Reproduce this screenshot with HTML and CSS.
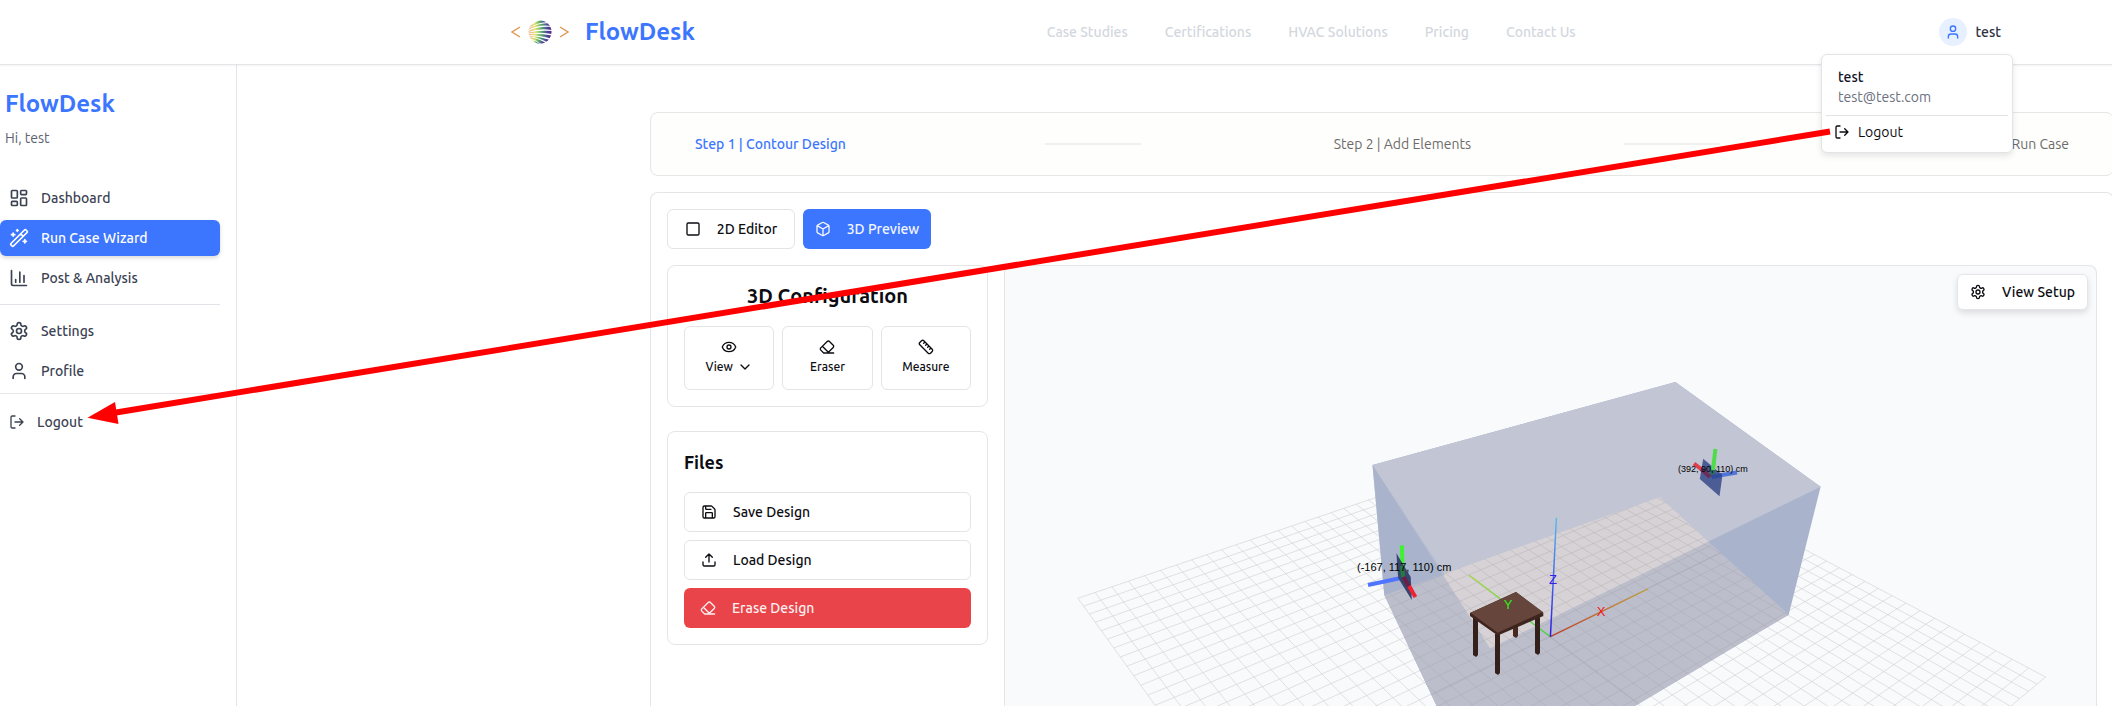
FILE: index.html
```html
<!DOCTYPE html>
<html lang="en">
<head>
<meta charset="utf-8">
<title>FlowDesk</title>
<meta name="viewport" content="width=device-width, initial-scale=1">
<link rel="stylesheet" href="styles.css">
</head>
<body>
<svg class="sprite" aria-hidden="true">
  <symbol id="i-logout" viewBox="0 0 24 24"><path d="M9 21H5a2 2 0 0 1-2-2V5a2 2 0 0 1 2-2h4M16 17l5-5-5-5M21 12H9"/></symbol>
  <symbol id="i-user" viewBox="0 0 24 24"><path d="M19 21v-2a4 4 0 0 0-4-4H9a4 4 0 0 0-4 4v2"/><circle cx="12" cy="7" r="4"/></symbol>
  <symbol id="i-gear" viewBox="0 0 24 24"><path d="M12.220 2h-.44a2 2 0 0 0-2 2v.18a2 2 0 0 1-1 1.730l-.43.25a2 2 0 0 1-2 0l-.15-.08a2 2 0 0 0-2.730.730l-.22.380a2 2 0 0 0 .730 2.730l.15.100a2 2 0 0 1 1 1.720v.510a2 2 0 0 1-1 1.740l-.15.090a2 2 0 0 0-.730 2.730l.22.380a2 2 0 0 0 2.730.730l.15-.08a2 2 0 0 1 2 0l.43.250a2 2 0 0 1 1 1.730V20a2 2 0 0 0 2 2h.440a2 2 0 0 0 2-2v-.18a2 2 0 0 1 1-1.730l.43-.25a2 2 0 0 1 2 0l.15.080a2 2 0 0 0 2.730-.730l.22-.390a2 2 0 0 0-.730-2.730l-.15-.08a2 2 0 0 1-1-1.740v-.5a2 2 0 0 1 1-1.740l.15-.090a2 2 0 0 0 .730-2.730l-.22-.380a2 2 0 0 0-2.730-.730l-.15.080a2 2 0 0 1-2 0l-.43-.25a2 2 0 0 1-1-1.730V4a2 2 0 0 0-2-2z"/><circle cx="12" cy="12" r="3"/></symbol>
  <symbol id="i-dash" viewBox="0 0 24 24"><rect x="3" y="3" width="7" height="9" rx="1"/><rect x="14" y="3" width="7" height="5" rx="1"/><rect x="14" y="12" width="7" height="9" rx="1"/><rect x="3" y="16" width="7" height="5" rx="1"/></symbol>
  <symbol id="i-wand" viewBox="0 0 24 24"><path d="m21.640 3.640-1.280-1.280a1.210 1.210 0 0 0-1.720 0L2.360 18.640a1.210 1.210 0 0 0 0 1.720l1.280 1.280a1.200 1.200 0 0 0 1.720 0L21.640 5.360a1.200 1.200 0 0 0 0-1.720M14 7l3 3M5 6v4M19 14v4M10 2v2M7 8H3M21 16h-4M11 3H9"/></symbol>
  <symbol id="i-chart" viewBox="0 0 24 24"><path d="M3 3v16a2 2 0 0 0 2 2h16M8 17v-3M13 17V5M18 17V9"/></symbol>
  <symbol id="i-square" viewBox="0 0 24 24"><rect x="3" y="3" width="18" height="18" rx="2"/></symbol>
  <symbol id="i-box" viewBox="0 0 24 24"><path d="M21 8a2 2 0 0 0-1-1.730l-7-4a2 2 0 0 0-2 0l-7 4A2 2 0 0 0 3 8v8a2 2 0 0 0 1 1.730l7 4a2 2 0 0 0 2 0l7-4A2 2 0 0 0 21 16ZM3.300 7l8.700 5 8.700-5M12 22V12"/></symbol>
  <symbol id="i-eye" viewBox="0 0 24 24"><path d="M2.060 12.350a1 1 0 0 1 0-.7 10.750 10.750 0 0 1 19.880 0 1 1 0 0 1 0 .7 10.750 10.750 0 0 1-19.880 0"/><circle cx="12" cy="12" r="3"/></symbol>
  <symbol id="i-eraser" viewBox="0 0 24 24"><path d="m7 21-4.300-4.300c-1-1-1-2.500 0-3.400l9.600-9.600c1-1 2.500-1 3.400 0l5.600 5.600c1 1 1 2.500 0 3.400L13 21M22 21H7M5 11l9 9"/></symbol>
  <symbol id="i-ruler" viewBox="0 0 24 24"><path d="M21.300 15.300a2.400 2.400 0 0 1 0 3.400l-2.600 2.600a2.400 2.400 0 0 1-3.400 0L2.700 8.700a2.410 2.410 0 0 1 0-3.400l2.600-2.600a2.410 2.410 0 0 1 3.400 0ZM14.500 12.500l2-2M11.500 9.500l2-2M8.500 6.500l2-2M17.500 15.500l2-2"/></symbol>
  <symbol id="i-chev" viewBox="0 0 24 24"><path d="m6 9 6 6 6-6"/></symbol>
  <symbol id="i-save" viewBox="0 0 24 24"><path d="M15.200 3a2 2 0 0 1 1.400.6l3.800 3.800a2 2 0 0 1 .6 1.400V19a2 2 0 0 1-2 2H5a2 2 0 0 1-2-2V5a2 2 0 0 1 2-2zM17 21v-7a1 1 0 0 0-1-1H8a1 1 0 0 0-1 1v7M7 3v4a1 1 0 0 0 1 1h7"/></symbol>
  <symbol id="i-upload" viewBox="0 0 24 24"><path d="M21 15v4a2 2 0 0 1-2 2H5a2 2 0 0 1-2-2v-4M17 8l-5-5-5 5M12 3v12"/></symbol>
</svg>

<div class="app">
  <header class="topbar">
    <a class="brand" href="#">
      <svg class="brand-mark" viewBox="0 0 62 28" aria-hidden="true">
        <defs>
          <linearGradient id="sphere" x1="0" x2="1" y1="0" y2="0"><stop offset="0" stop-color="#f3b0a0"/><stop offset=".3" stop-color="#e3e36c"/><stop offset=".55" stop-color="#58b06a"/><stop offset=".8" stop-color="#4b4a9c"/><stop offset="1" stop-color="#5a1a7c"/></linearGradient>
          <clipPath id="ball"><circle cx="31" cy="14" r="11.500"/></clipPath>
        </defs>
        <path class="angle" d="M11 9 3 14l8 5M51 9l8 5-8 5"/>
        <g clip-path="url(#ball)" fill="url(#sphere)">
          <path d="M21 8Q28 2 36 1L39 4Q29 4 20 10Z"/>
          <path d="M19 11Q28 5 41 5L43 8Q30 6 19 12Z"/>
          <path d="M19 13Q30 8 43 9V12Q30 10 19 14Z"/>
          <path d="M19 14.500Q30 12 43 13V16Q30 14 19 15.500Z"/>
          <path d="M19 16Q30 15 43 17.500L42 20.500Q30 17 19 17Z"/>
          <path d="M19 17.500Q30 18 41 22L39 24.500Q28 19 20 18.500Z"/>
          <path d="M20 19Q28 20 37 25L33 27Q27 22 21 20.500Z"/>
          <path d="M22 22Q27 23 31 26L26 27Z"/>
        </g>
      </svg>
      <span class="wordmark">FlowDesk</span>
    </a>
    <nav class="topnav">
      <a href="#">Case Studies</a><a href="#">Certifications</a><a href="#">HVAC Solutions</a><a href="#">Pricing</a><a href="#">Contact Us</a>
    </nav>
    <div class="account">
      <button class="account-btn" type="button"><span class="avatar"><svg class="ico s16"><use href="#i-user"/></svg></span>test</button>
      <div class="menu">
        <div class="menu-head"><strong>test</strong><span>test@test.com</span></div>
        <button class="menu-item" type="button"><svg class="ico s16"><use href="#i-logout"/></svg>Logout</button>
      </div>
    </div>
  </header>

  <div class="body">
    <aside class="sidebar">
      <div class="side-head"><span class="wordmark">FlowDesk</span><p>Hi, test</p></div>
      <nav class="side-nav">
        <a href="#"><svg class="ico s20"><use href="#i-dash"/></svg>Dashboard</a>
        <a class="active" href="#"><svg class="ico s20"><use href="#i-wand"/></svg>Run Case Wizard</a>
        <a href="#"><svg class="ico s20"><use href="#i-chart"/></svg>Post &amp; Analysis</a>
      </nav>
      <nav class="side-nav second">
        <a href="#"><svg class="ico s20"><use href="#i-gear"/></svg>Settings</a>
        <a href="#"><svg class="ico s20"><use href="#i-user"/></svg>Profile</a>
      </nav>
      <div class="side-foot"><button type="button"><svg class="ico s16"><use href="#i-logout"/></svg>Logout</button></div>
    </aside>

    <main class="main">
      <ol class="steps">
        <li class="current">Step 1 | Contour Design</li>
        <li class="bar"></li>
        <li>Step 2 | Add Elements</li>
        <li class="bar"></li>
        <li>Step 3 | Run Case</li>
      </ol>
      <section class="work">
        <div class="tabs">
          <button class="btn" type="button"><svg class="ico s16"><use href="#i-square"/></svg>2D Editor</button>
          <button class="btn primary" type="button"><svg class="ico s16"><use href="#i-box"/></svg>3D Preview</button>
        </div>
        <div class="columns">
          <div class="panels">
            <section class="panel">
              <h2>3D Configuration</h2>
              <div class="tools">
                <button type="button"><svg class="ico s16"><use href="#i-eye"/></svg><span>View <svg class="ico s16"><use href="#i-chev"/></svg></span></button>
                <button type="button"><svg class="ico s16"><use href="#i-eraser"/></svg><span>Eraser</span></button>
                <button type="button"><svg class="ico s16"><use href="#i-ruler"/></svg><span>Measure</span></button>
              </div>
            </section>
            <section class="panel files">
              <h3>Files</h3>
              <button class="btn" type="button"><svg class="ico s16"><use href="#i-save"/></svg>Save Design</button>
              <button class="btn" type="button"><svg class="ico s16"><use href="#i-upload"/></svg>Load Design</button>
              <button class="btn danger" type="button"><svg class="ico s16"><use href="#i-eraser"/></svg>Erase Design</button>
            </section>
          </div>
          <div class="scene">
            <svg class="canvas" viewBox="1005 266 1091 440" preserveAspectRatio="xMidYMin slice" role="img" aria-label="3D preview of the room">
              <defs>
                <clipPath id="floor"><path d="M1384.300 595 1659.700 497 1788.700 614.700 1480 798Z"/></clipPath>
                <clipPath id="roof"><path d="M1372.500 465 1675.400 382 1820.600 486.700 1490 648.300Z"/></clipPath>
                <linearGradient id="gz" gradientUnits="userSpaceOnUse" x1="1556" y1="518" x2="1550" y2="637"><stop stop-color="#5cbcec"/><stop offset="1" stop-color="#2c18e6"/></linearGradient>
                <linearGradient id="gx" gradientUnits="userSpaceOnUse" x1="1550" y1="637" x2="1648" y2="589"><stop stop-color="#c23a2c"/><stop offset="1" stop-color="#c2a030"/></linearGradient>
                <linearGradient id="gy" gradientUnits="userSpaceOnUse" x1="1550" y1="637" x2="1469" y2="575"><stop stop-color="#3cd83c"/><stop offset="1" stop-color="#a4d83c"/></linearGradient>
              </defs>
              <path id="grid" class="grid"/>
              <path fill="#a9b4cc" d="M1372.500 465 1675.400 382 1820.600 486.700 1788.700 614.700 1480 798 1384.300 595Z"/>
              <path fill="#c2c5d4" d="M1372.500 465 1675.400 382 1820.600 486.700 1490 648.300Z"/>
              <g clip-path="url(#floor)">
                <path fill="#bcbecc" d="M1380 480H1800V800H1380Z"/>
                <path clip-path="url(#roof)" fill="#d7d2d6" d="M1360 370H1830V660H1360Z"/>
                <use href="#grid" class="grid-floor"/>
                <path class="axis-shade" d="M1550.400 636.700 1767.300 529.700M1550.400 636.700 1387 717M1550.400 636.700 1700 750"/>
              </g>
              <path fill="#a9b4cc" fill-opacity=".55" d="M1372.500 465 1445 575 1384.300 595Z"/>
              <g class="beam">
                <path stroke="#4f74ff" d="M1368 585 1401 578"/>
                <path stroke="#3df22e" d="M1401.800 545.300 1403 577"/>
                <path fill="#36456f" d="M1396.400 553.300 1410.700 577 1411.800 600 1398.200 578Z"/>
                <path stroke="#257a3c" d="M1402 566 1403 577"/>
                <path stroke="#6b1f45" d="M1403.500 577 1411 590"/>
                <path stroke="#ee2233" d="M1409 586 1415.400 597"/>
                <path fill="#4b5d94" d="M1703.200 458.700 1722.500 475 1719.500 496.300 1699.800 479Z"/>
                <path stroke="#4edd48" d="M1715.400 449 1713 470"/>
                <path stroke="#2b6b58" d="M1713 470 1712.300 477"/>
                <path stroke="#e2404b" d="M1694 463.500 1701 469"/>
                <path stroke="#6c2c58" d="M1701 469 1710 477"/>
                <path stroke="#2e4ba0" d="M1711.700 477 1722 475"/>
                <path stroke="#5174d8" d="M1722 475 1737 472.500"/>
              </g>
              <text class="coord" x="1357" y="571">(-167, 117, 110) cm</text>
              <text class="coord far" x="1678" y="472">(392, 90, 110) cm</text>
              <g fill="none">
                <path stroke="url(#gy)" stroke-width="1.300" d="M1550.400 636.700 1469.300 575.300"/>
                <path stroke="url(#gx)" stroke-width="1.300" d="M1550.400 636.700 1647.900 589"/>
                <path stroke="url(#gz)" stroke-width="1.500" d="M1550.400 636.700 1556.400 517.700"/>
              </g>
              <g>
                <path fill="#46291f" d="M1513 620h5v16l-2 2-3-2Z"/>
                <path fill="#33201b" d="M1473 614h5v41l-2 2-3-2ZM1535 614h5v39l-2 2-3-2ZM1495 634h5v39l-2 2-3-2Z"/>
                <path fill="#3e251d" d="M1470 613 1516 592 1543.300 612.700V616L1497.700 635.500 1470 616Z"/>
                <path fill="#65453c" d="M1470.500 612.800 1516 592 1543 612 1497.700 632.700Z"/>
              </g>
              <text class="axis" fill="#3a1ee6" x="1553" y="584">Z</text>
              <text class="axis" fill="#f01818" x="1601" y="616">X</text>
              <text class="axis" fill="#30f018" x="1508" y="609">Y</text>
            </svg>
            <button class="view-setup" type="button"><svg class="ico s16"><use href="#i-gear"/></svg>View Setup</button>
          </div>
        </div>
      </section>
    </main>
  </div>
  <svg class="arrow" viewBox="0 0 2112 706" preserveAspectRatio="none" aria-hidden="true">
    <path d="M1830 131.500 110 413.500" stroke="#f00" stroke-width="6"/>
    <path d="M87.500 417.700 115 402 118.500 424Z" fill="#f00"/>
  </svg>
</div>
<script src="scene.js"></script>
</body>
</html>
```

FILE: styles.css
```css
* { box-sizing: border-box; }
body {
  margin: 0;
  font: 500 14px/20px Ubuntu, "Noto Sans", "Open Sans", sans-serif;
  color: #0c0c12;
  background: #fff;
}
a { color: inherit; text-decoration: none; }
button { font: inherit; color: inherit; background: none; border: 0; padding: 0; cursor: pointer; }
h2, h3, p, ol { margin: 0; padding: 0; }
.sprite { position: absolute; width: 0; height: 0; }
.ico { fill: none; stroke: currentColor; stroke-width: 2; stroke-linecap: round; stroke-linejoin: round; flex: none; }
.s16 { width: 16px; height: 16px; }
.s20 { width: 20px; height: 20px; }

.app { position: relative; min-height: 100vh; display: flex; flex-direction: column; overflow: hidden; }

.topbar {
  position: relative;
  z-index: 2;
  height: 65px;
  padding: 0 111px 0 509px;
  display: flex;
  align-items: center;
  justify-content: space-between;
  border-bottom: 1px solid #e4e5e8;
  box-shadow: 0 1px 2px rgba(0, 0, 0, .05);
}
.brand { display: flex; align-items: center; gap: 14px; }
.brand-mark { width: 62px; height: 28px; }
.angle { fill: none; stroke: #e0954f; stroke-width: 1.4; }
.wordmark { font-size: 24px; line-height: 32px; font-weight: 700; color: #3c76ff; }
.topnav { display: flex; gap: 37px; padding-right: 12px; color: #d3d7de; }
.account { position: relative; }
.account-btn { display: flex; align-items: center; gap: 8px; color: #2d3342; }
.avatar { width: 28px; height: 28px; border-radius: 50%; background: #e6f0ff; color: #3c76ff; display: grid; place-items: center; }
.menu {
  position: absolute;
  top: 36px;
  right: -12px;
  width: 192px;
  padding: 4px;
  background: #fff;
  border: 1px solid #e3e4e7;
  border-radius: 6px;
  box-shadow: 0 3px 6px rgba(0, 0, 0, .1);
}
.menu-head { padding: 8px 12px; border-bottom: 1px solid #e1e2e6; display: flex; flex-direction: column; }
.menu-head strong { font-weight: 500; color: #10131f; }
.menu-head span { font-weight: 400; color: #6b7180; }
.menu-item { display: flex; align-items: center; gap: 8px; width: 100%; padding: 6px 8px; font-weight: 400; }

.body { flex: 1; display: flex; }
.sidebar { flex: none; width: 237px; border-right: 1px solid #e4e5e8; color: #3b4252; padding-top: 23px; }
.side-head { padding: 0 5px; height: 92px; }
.side-head p { margin-top: 8px; font-weight: 400; color: #5c6372; }
.side-nav { width: 220px; display: flex; flex-direction: column; gap: 4px; padding-bottom: 8px; border-bottom: 1px solid #e1e3e8; }
.side-nav a { display: flex; align-items: center; gap: 12px; height: 36px; padding-left: 9px; border-radius: 6px; }
.side-nav .active { color: #fff; background: #3c76ff; box-shadow: 0 2px 4px rgba(0, 0, 0, .15); }
.side-nav.second { padding: 8px 0 4px; width: 236px; border-color: #e6e7eb; }
.side-foot button { display: flex; align-items: center; gap: 12px; padding: 18px 9px; }

.main { flex: 1; min-width: 0; margin-right: -2px; padding: 47px 0 0 413px; display: flex; flex-direction: column; gap: 16px; }
.steps {
  height: 64px;
  padding: 0 44px;
  display: grid;
  grid-template-columns: 350fr 289fr 290fr 338fr auto;
  align-items: center;
  list-style: none;
  background: #fefefc;
  border: 1px solid #e5e6e6;
  border-radius: 8px;
  font-weight: 400;
  color: #6d6b6a;
}
.steps .current { color: #3c76ff; font-weight: 500; }
.steps .bar { width: 96px; height: 2px; background: #f0f0ef; }
.work {
  flex: 1;
  display: flex;
  flex-direction: column;
  gap: 16px;
  padding: 16px 16px 0;
  border: 1px solid #e5e5e6;
  border-bottom: 0;
  border-radius: 8px 8px 0 0;
}
.tabs { display: flex; gap: 8px; }
.btn {
  display: flex;
  align-items: center;
  gap: 16px;
  height: 40px;
  padding: 0 16px;
  border: 1px solid #e4e4e6;
  border-radius: 6px;
}
.tabs .btn { width: 128px; justify-content: center; white-space: nowrap; padding: 0; }
.btn.primary { background: #3c76ff; border: 0; color: #f4f7ff; }
.btn.danger { background: #e9444a; border: 0; color: #fdf0f0; }
.columns { flex: 1; display: flex; gap: 16px; }
.panels { flex: none; width: 321px; display: flex; flex-direction: column; gap: 24px; }
.panel { padding: 16px; border: 1px solid #e5e5e7; border-radius: 8px; }
.panel h2 { font-size: 20px; line-height: 28px; font-weight: 700; text-align: center; margin-bottom: 16px; }
.panel h3 { font-size: 18px; line-height: 28px; font-weight: 700; margin-bottom: 8px; }
.files { display: flex; flex-direction: column; gap: 8px; }
.tools { display: grid; grid-template-columns: repeat(3, 1fr); gap: 8px; }
.tools button {
  height: 64px;
  display: flex;
  flex-direction: column;
  align-items: center;
  justify-content: center;
  gap: 2px;
  font-size: 12px;
  line-height: 20px;
  border: 1px solid #e4e4e6;
  border-radius: 6px;
}
.tools span { display: flex; align-items: center; gap: 4px; }
.scene {
  flex: 1;
  position: relative;
  overflow: hidden;
  background: #f9fafc;
  border: 1px solid #e5e5e7;
  border-bottom: 0;
  border-radius: 8px 8px 0 0;
}
.canvas { position: absolute; inset: 0; width: 100%; height: 100%; }
.grid { fill: none; stroke: #d2d3d6; stroke-opacity: .65; stroke-width: 1; }
.grid-floor { opacity: .45; filter: brightness(.75); }
.axis-shade { fill: none; stroke: #9a9ba8; stroke-opacity: .3; }
.beam { stroke-width: 4; }
.coord { font: 400 11px "Liberation Sans", Arial, sans-serif; fill: #000; }
.coord.far { font-size: 9px; }
.axis { font: 400 13px "Liberation Sans", Arial, sans-serif; text-anchor: middle; }
.view-setup {
  position: absolute;
  top: 8px;
  right: 8px;
  height: 36px;
  padding: 0 12px;
  display: flex;
  align-items: center;
  gap: 16px;
  background: #fff;
  border: 1px solid #e6e6e8;
  border-radius: 6px;
  box-shadow: 0 3px 6px rgba(0, 0, 0, .12);
}
.arrow { position: absolute; inset: 0; width: 100%; height: 100%; z-index: 3; pointer-events: none; }
```

FILE: scene.js
```js
// Projects the square ground grid onto its four screen corners.
(function () {
  var corners = [[1077.9, 598.3], [1577.6, 429.3], [2045.6, 677], [1477.7, 1151.7]];
  var cells = 40;
  var p0 = corners[0], p1 = corners[1], p2 = corners[2], p3 = corners[3];
  var dx1 = p1[0] - p2[0], dx2 = p3[0] - p2[0], sx = p0[0] - p1[0] + p2[0] - p3[0];
  var dy1 = p1[1] - p2[1], dy2 = p3[1] - p2[1], sy = p0[1] - p1[1] + p2[1] - p3[1];
  var det = dx1 * dy2 - dx2 * dy1;
  var g = (sx * dy2 - dx2 * sy) / det;
  var h = (dx1 * sy - sx * dy1) / det;
  function project(u, v) {
    var w = g * u + h * v + 1;
    var x = ((p1[0] - p0[0] + g * p1[0]) * u + (p3[0] - p0[0] + h * p3[0]) * v + p0[0]) / w;
    var y = ((p1[1] - p0[1] + g * p1[1]) * u + (p3[1] - p0[1] + h * p3[1]) * v + p0[1]) / w;
    return x.toFixed(1) + " " + y.toFixed(1);
  }
  var d = "";
  for (var i = 0; i <= cells; i++) {
    var t = i / cells;
    d += "M" + project(t, 0) + "L" + project(t, 1) + "M" + project(0, t) + "L" + project(1, t);
  }
  document.getElementById("grid").setAttribute("d", d);
})();
```
